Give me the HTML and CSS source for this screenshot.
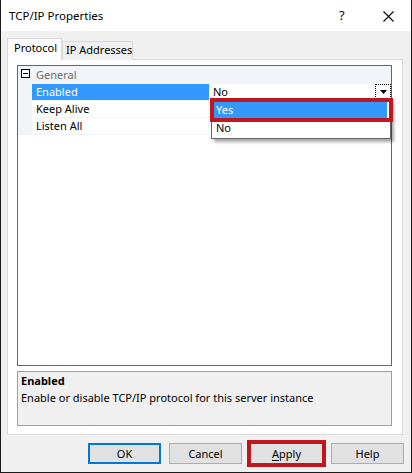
FILE: index.html
```html
<!DOCTYPE html>
<html>
<head>
<meta charset="utf-8">
<link rel="stylesheet" href="styles.css">
</head>
<body>
<div class="window">
  <div class="titlebar">
    <span class="title">TCP/IP Properties</span>
    <span class="help">?</span>
    <span class="close">
      <svg width="11" height="11" viewBox="0 0 11 11"><path d="M0.5 0.5 L10.5 10.5 M10.5 0.5 L0.5 10.5" stroke="#000" stroke-width="1.1" fill="none"/></svg>
    </span>
  </div>
  <div class="client">
    <div class="tabs">
      <div class="tab active">Protocol</div>
      <div class="tab">IP Addresses</div>
    </div>
    <div class="panel">
      <div class="grid">
        <div class="row cat">
          <span class="gutter"><span class="toggle"></span></span>
          <span class="catlabel">General</span>
        </div>
        <div class="row sel">
          <span class="gutter"></span>
          <span class="label">Enabled</span>
          <span class="value">No<span class="ddbtn"><svg width="7" height="4" viewBox="0 0 7 4"><path d="M0 0 H7 L3.5 4 Z" fill="#000"/></svg></span></span>
        </div>
        <div class="row">
          <span class="gutter"></span>
          <span class="label">Keep Alive</span>
          <span class="value"></span>
        </div>
        <div class="row">
          <span class="gutter"></span>
          <span class="label">Listen All</span>
          <span class="value"></span>
        </div>
        <div class="ddlist">
          <div class="dditem hl">Yes</div>
          <div class="dditem">No</div>
          <div class="redbox"></div>
        </div>
      </div>
      <div class="desc">
        <div class="desc-title">Enabled</div>
        <div class="desc-text">Enable or disable TCP/IP protocol for this server instance</div>
      </div>
    </div>
    <div class="buttons">
      <div class="btn default">OK</div>
      <div class="btn">Cancel</div>
      <div class="btn marked"><u>A</u>pply</div>
      <div class="btn">Help</div>
    </div>
  </div>
</div>
</body>
</html>
```
FILE: styles.css
```css
* { box-sizing: border-box; }
html, body { margin: 0; padding: 0; background: #fff; }
body {
  font-family: "Noto Sans", "Open Sans", sans-serif;
  font-size: 11px;
  color: #000;
}
.window {
  width: 412px;
  height: 473px;
  border-left: 1px solid #1a1a1a;
  border-right: 1px solid #1a1a1a;
  border-bottom: 1px solid #1a1a1a;
  display: flex;
  flex-direction: column;
  background: #f0f0f0;
}
.titlebar {
  height: 31px;
  background: #fff;
  display: flex;
  align-items: center;
  padding-left: 8px;
  flex: none;
}
.title { flex: 1; font-size: 11.5px; padding-bottom: 1px; }
.help { width: 12px; margin-right: 32px; font-size: 13px; padding-bottom: 1px; }
.close { width: 11px; height: 11px; margin-right: 17px; display: flex; margin-top: 2px; }
.client {
  flex: 1;
  padding: 7px 7px 8px 6px;
  display: flex;
  flex-direction: column;
}
.tabs {
  display: flex;
  align-items: flex-end;
  height: 22px;
  position: relative;
  z-index: 1;
  margin-bottom: -1px;
  flex: none;
}
.tab {
  height: 19px;
  border: 1px solid #d9d9d9;
  border-bottom: none;
  background: #f0f0f0;
  padding: 0 3px;
  line-height: 16px;
  width: 71px;
  white-space: nowrap;
}
.tab.active {
  height: 22px;
  width: 55px;
  background: #fff;
  padding-left: 6px;
  line-height: 18px;
}
.panel {
  width: 396px;
  height: 376px;
  border: 1px solid #d9d9d9;
  background: #fff;
  padding: 5px 10px 8px 9px;
  display: flex;
  flex-direction: column;
  gap: 5px;
  flex: none;
}
.grid {
  position: relative;
  height: 301px;
  border: 1px solid #646464;
  background: #fff;
  flex: none;
}
.row {
  display: flex;
  height: 17px;
  border-bottom: 1px solid #f1f4f9;
}
.row.cat { height: 18px; background: #f1f4f9; align-items: center; }
.gutter {
  width: 14px;
  flex: none;
  background: #f1f4f9;
  display: flex;
  align-items: center;
  justify-content: center;
  padding-left: 1px;
}
.toggle {
  width: 9px;
  height: 9px;
  border: 1px solid #000;
  position: relative;
  background: #fff;
  margin-top: -2px;
}
.toggle::after {
  content: "";
  position: absolute;
  left: 1px;
  right: 1px;
  top: 3px;
  height: 1px;
  background: #000;
}
.catlabel { color: #6d6d6d; padding-left: 4px; line-height: 16px; }
.label {
  width: 177px;
  flex: none;
  padding-left: 4px;
  line-height: 16px;
  border-right: 1px solid #f1f4f9;
}
.value {
  flex: 1;
  padding-left: 4px;
  line-height: 16px;
  display: flex;
  justify-content: space-between;
}
.row.sel .label { background: #3399ff; color: #fff; border-right-color: #3399ff; }
.ddbtn {
  width: 16px;
  height: 15px;
  border: 1px dotted #000;
  display: flex;
  align-items: center;
  justify-content: center;
  background: #fff;
}
.ddlist {
  position: absolute;
  left: 193px;
  top: 33px;
  width: 180px;
  height: 40px;
  border: 1px solid #646464;
  background: #fff;
  padding: 2px 3px 2px 2px;
  box-shadow: 3px 3px 3px rgba(0,0,0,0.35);
}
.dditem { height: 17px; line-height: 16px; padding-left: 2px; }
.dditem.hl { background: #3399ff; color: #fff; height: 16px; margin-bottom: 2px; }
.redbox {
  position: absolute;
  left: -2px;
  top: -2px;
  width: 183px;
  height: 24px;
  border: 4px solid #c1161d;
}
.desc {
  height: 55px;
  border: 1px solid #a0a0a0;
  background: #f0f0f0;
  padding: 1px 3px;
  flex: none;
}
.desc-title { font-weight: bold; line-height: 16px; }
.desc-text { line-height: 18px; }
.buttons {
  display: flex;
  justify-content: flex-end;
  gap: 8px;
  margin-top: 8px;
}
.btn {
  width: 73px;
  height: 21px;
  border: 1px solid #adadad;
  background: #e1e1e1;
  text-align: center;
  line-height: 19px;
}
.btn.default { border: 2px solid #0078d7; line-height: 17px; }
.btn.marked { outline: 4px solid #c1161d; outline-offset: -1px; }
.btn u { text-decoration: underline; text-underline-offset: 2px; }
```
